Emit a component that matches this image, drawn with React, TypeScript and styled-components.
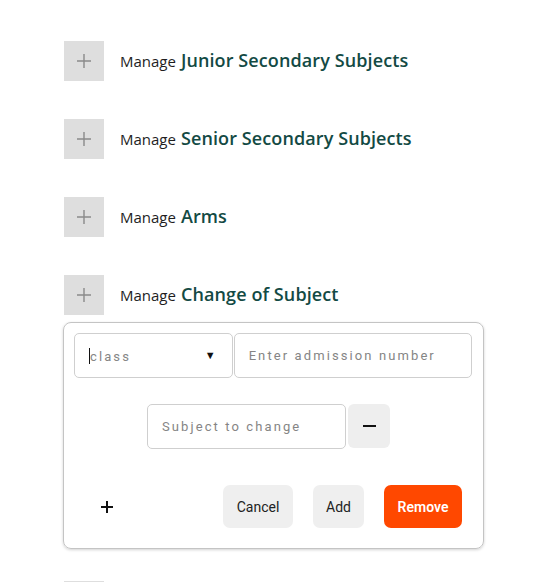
import React from "react";
import styled, { createGlobalStyle } from "styled-components";

const Global = createGlobalStyle`
  body { margin: 0; background: #fff; font-family: "Open Sans", "Segoe UI", sans-serif; }
  * { box-sizing: border-box; }
`;

const Page = styled.div`
  padding: 41px 0 0 64px;
  width: 540px;
  height: 582px;
  overflow: hidden;
`;

const Section = styled.div<{ $gap: number }>`
  margin-bottom: ${(p) => p.$gap}px;
`;

const Row = styled.div`
  display: flex;
  align-items: center;
  height: 40px;
`;

const PlusBox = styled.div`
  width: 40px;
  height: 40px;
  background: #dedede;
  display: flex;
  align-items: center;
  justify-content: center;
`;

const Title = styled.div`
  margin-left: 16px;
  display: flex;
  align-items: baseline;
  gap: 5px;
  color: #1e1e1e;
  font-size: 15px;
  margin-top: -3px;
`;

const Strong = styled.span`
  font-size: 18px;
  font-weight: 600;
  letter-spacing: 0.1px;
  color: #134a44;
`;

const Panel = styled.div`
  margin-top: 7px;
  margin-left: -1px;
  width: 421px;
  border: 1px solid #c4c4c4;
  border-radius: 8px;
  box-shadow: 0 1px 3px rgba(0, 0, 0, 0.18);
  padding: 10px 11px 20px 10px;
  font-family: Roboto, sans-serif;
`;

const TopRow = styled.div`
  display: flex;
  gap: 1px;
`;

const Field = styled.div<{ $w: number }>`
  width: ${(p) => p.$w}px;
  height: 45px;
  border: 1px solid #cfcfcf;
  border-radius: 5px;
  display: flex;
  align-items: center;
  padding: 0 14px;
  font-size: 13px;
  letter-spacing: 2.1px;
  color: #858585;
  white-space: nowrap;
`;

const SelectField = styled(Field)`
  justify-content: space-between;
  padding-right: 16px;
`;

const Caret = styled.span`
  display: inline-block;
  width: 1px;
  height: 16px;
  background: #111;
  vertical-align: -3px;
`;

const Arrow = styled.span`
  font-size: 11px;
  color: #111;
  letter-spacing: 0;
`;

const MidRow = styled.div`
  display: flex;
  gap: 2px;
  margin-top: 26px;
  padding-left: 73px;
`;

const MinusBtn = styled.div`
  width: 42px;
  height: 44px;
  border-radius: 6px;
  background: #eeeeee;
  display: flex;
  align-items: center;
  justify-content: center;
`;

const BottomRow = styled.div`
  display: flex;
  align-items: center;
  margin-top: 36px;
  padding-left: 26px;
  padding-right: 10px;
`;

const Spacer = styled.div`
  flex: 1;
`;

const Btn = styled.button<{ $primary?: boolean; $w: number; $ml: number }>`
  width: ${(p) => p.$w}px;
  margin-left: ${(p) => p.$ml}px;
  height: 43px;
  border: none;
  border-radius: 7px;
  background: ${(p) => (p.$primary ? "#ff4800" : "#efefef")};
  color: ${(p) => (p.$primary ? "#fff" : "#222")};
  font-family: Roboto, sans-serif;
  font-size: 14px;
  font-weight: ${(p) => (p.$primary ? 600 : 400)};
  padding: 0;
`;

const sections = [
  "Junior Secondary Subjects",
  "Senior Secondary Subjects",
  "Arms",
  "Change of Subject",
];

const ThinPlus = () => (
  <svg width="16" height="16" viewBox="0 0 16 16">
    <path d="M8 1v14M1 8h14" stroke="#8a8a8a" strokeWidth="1.4" />
  </svg>
);

export default function App() {
  return (
    <>
      <Global />
      <Page>
        {sections.map((s, i) => (
          <Section key={s} $gap={i === 3 ? 32 : 38}>
            <Row>
              <PlusBox>
                <ThinPlus />
              </PlusBox>
              <Title>
                Manage <Strong>{s}</Strong>
              </Title>
            </Row>
            {i === 3 && (
              <Panel>
                <TopRow>
                  <SelectField $w={159}>
                    <span>
                      <Caret />
                      class
                    </span>
                    <Arrow>▼</Arrow>
                  </SelectField>
                  <Field $w={239}>Enter admission number</Field>
                </TopRow>
                <MidRow>
                  <Field $w={199}>Subject to change</Field>
                  <MinusBtn>
                    <svg width="13" height="4" viewBox="0 0 13 4">
                      <rect x="0" y="1" width="13" height="2" fill="#111" />
                    </svg>
                  </MinusBtn>
                </MidRow>
                <BottomRow>
                  <svg width="14" height="14" viewBox="0 0 14 14">
                    <path d="M7 1v12M1 7h12" stroke="#111" strokeWidth="2" />
                  </svg>
                  <Spacer />
                  <Btn $w={70} $ml={0}>Cancel</Btn>
                  <Btn $w={51} $ml={20}>Add</Btn>
                  <Btn $primary $w={78} $ml={20}>Remove</Btn>
                </BottomRow>
              </Panel>
            )}
          </Section>
        ))}
        <Section $gap={0}>
          <Row>
            <PlusBox>
              <ThinPlus />
            </PlusBox>
          </Row>
        </Section>
      </Page>
    </>
  );
}
